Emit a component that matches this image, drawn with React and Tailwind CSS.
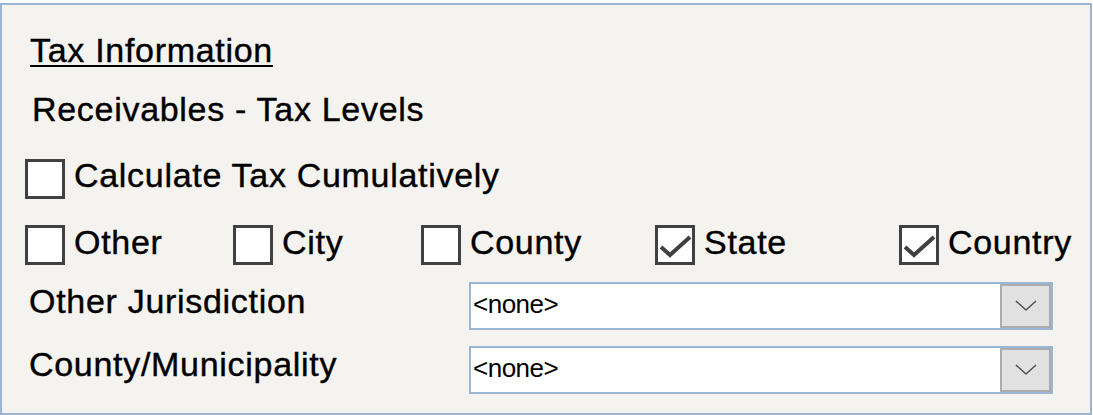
import React from "react";

const font = { fontFamily: '"Liberation Sans", Arial, sans-serif' };

function Box({ checked }) {
  return (
    <div className="w-[40px] h-[40px] border-[3px] border-[#404040] bg-white shrink-0">
      {checked && (
        <svg width="34" height="34" viewBox="0 0 34 34">
          <polyline points="3,19 12,27 32,9" fill="none" stroke="#404040" strokeWidth="4" />
        </svg>
      )}
    </div>
  );
}

function Check({ label, checked, w }) {
  return (
    <div className={`flex items-center gap-[9px] ${w}`}>
      <Box checked={checked} />
      <span className="pb-[7px] leading-none">{label}</span>
    </div>
  );
}

function Drop() {
  return (
    <div className="flex w-[584px] h-[48px] border-2 border-[#9cb6d5] bg-white">
      <div className="flex-1 flex items-center pl-[2px] pb-[4px] text-[26px] leading-none tracking-[-0.5px] [-webkit-text-stroke:0px]">
        &lt;none&gt;
      </div>
      <div className="w-[51px] h-full border-2 border-[#acacac] bg-[#e1e1e1] flex items-center justify-center">
        <svg width="22" height="12" viewBox="0 0 22 12">
          <polyline points="1,1 11,10 21,1" fill="none" stroke="#555" strokeWidth="1.6" />
        </svg>
      </div>
    </div>
  );
}

export default function App() {
  return (
    <div className="w-[1093px] h-[415px] bg-white pt-[3px]">
      <div className="w-[1092px] h-[412px] border-2 border-[#9db5d3] bg-[#f4f3ef] text-black text-[34px] tracking-[0.7px] [-webkit-text-stroke:0.4px_black] flex flex-col" style={font}>
        <div className="h-[25px]" />
        <div className="h-[41px] flex items-center pl-[28px]">
          <span className="leading-none underline decoration-2 underline-offset-[3px] pb-[2px]">Tax Information</span>
        </div>
        <div className="h-[19px]" />
        <div className="h-[40px] flex items-center pl-[30px]">
          <span className="leading-none pb-[2px]">Receivables - Tax Levels</span>
        </div>
        <div className="h-[28px]" />
        <div className="h-[41px] flex items-center pl-[23px]">
          <Check label="Calculate Tax Cumulatively" />
        </div>
        <div className="h-[26px]" />
        <div className="h-[40px] flex items-center pl-[23px]">
          <Check label="Other" w="w-[208px]" />
          <Check label="City" w="w-[188px]" />
          <Check label="County" w="w-[234px]" />
          <Check label="State" checked w="w-[244px]" />
          <Check label="Country" checked />
        </div>
        <div className="h-[17px]" />
        <div className="h-[48px] flex items-center pl-[27px]">
          <span className="w-[440px] leading-none pb-[10px]">Other Jurisdiction</span>
          <Drop />
        </div>
        <div className="h-[16px]" />
        <div className="h-[48px] flex items-center pl-[27px]">
          <span className="w-[440px] leading-none pb-[12px]">County/Municipality</span>
          <Drop />
        </div>
      </div>
    </div>
  );
}
